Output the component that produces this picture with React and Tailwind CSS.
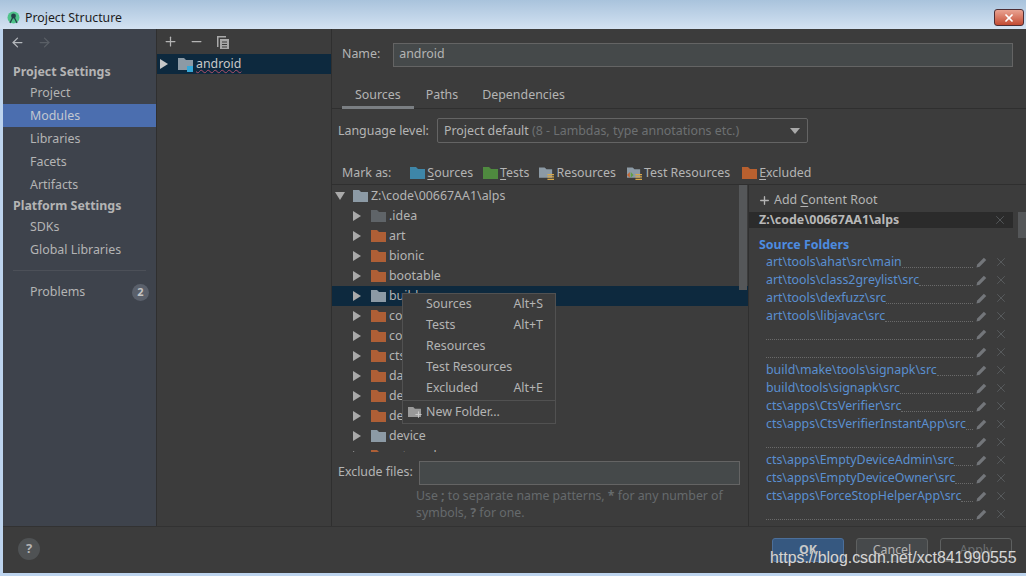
import { ArrowLeft, ArrowRight, Plus, Minus, X } from "lucide-react";

const font = "font-['Noto_Sans',sans-serif]";

const navProject = ["Project", "Modules", "Libraries", "Facets", "Artifacts"];
const navPlatform = ["SDKs", "Global Libraries"];

const treeRows = [
  { name: ".idea", color: "#5f6468" },
  { name: "art", color: "#ae5f36" },
  { name: "bionic", color: "#ae5f36" },
  { name: "bootable", color: "#ae5f36" },
  { name: "build", color: "#8c9aa5", selected: true },
  { name: "common", color: "#ae5f36" },
  { name: "compat", color: "#ae5f36" },
  { name: "cts", color: "#ae5f36" },
  { name: "dalvik", color: "#ae5f36" },
  { name: "developers", color: "#ae5f36" },
  { name: "development", color: "#ae5f36" },
  { name: "device", color: "#8c9aa5" },
  { name: "external", color: "#ae5f36" },
];

const sourceFolders = [
  "art\\tools\\ahat\\src\\main",
  "art\\tools\\class2greylist\\src",
  "art\\tools\\dexfuzz\\src",
  "art\\tools\\libjavac\\src",
  "",
  "",
  "build\\make\\tools\\signapk\\src",
  "build\\tools\\signapk\\src",
  "cts\\apps\\CtsVerifier\\src",
  "cts\\apps\\CtsVerifierInstantApp\\src",
  "",
  "cts\\apps\\EmptyDeviceAdmin\\src",
  "cts\\apps\\EmptyDeviceOwner\\src",
  "cts\\apps\\ForceStopHelperApp\\src",
  "",
];

const menuItems = [
  { label: "Sources", key: "Alt+S" },
  { label: "Tests", key: "Alt+T" },
  { label: "Resources" },
  { label: "Test Resources" },
  { label: "Excluded", key: "Alt+E" },
];

function Folder({ color, size = 15, className = "" }) {
  return (
    <svg width={size} height={(size * 12) / 15} viewBox="0 0 15 12" className={`shrink-0 ${className}`}>
      <path d="M0 0h6l2 2h7v10H0z" fill={color} />
    </svg>
  );
}

function Caret({ open, light }) {
  if (open) {
    return (
      <svg width="10" height="8" viewBox="0 0 10 8" className="shrink-0">
        <path d="M0 0h10L5 8z" fill="#a9a9a9" />
      </svg>
    );
  }
  return (
    <svg width="8" height="10" viewBox="0 0 8 10" className="shrink-0">
      <path d="M0 0l8 5-8 5z" fill={light ? "#c8c8c8" : "#a9a9a9"} />
    </svg>
  );
}

function ResourceFolder({ test }) {
  return (
    <svg width="15" height="15" viewBox="0 0 16 15" className="shrink-0">
      <path d="M0 1h6l2 2h6v9H0z" fill="#8c9aa5" />
      {test && <path d="M0 9l3-3v6z" fill="#c7652f" />}
      {test && <path d="M4 6l3 3-3 3z" fill="#5f9e46" />}
      <path d="M9 8h7v1.3H9zM9 10.5h7v1.3H9zM9 13h7v1.3H9z" fill="#d8a84a" />
    </svg>
  );
}

function MarkItem({ icon, first, rest, plain, className = "" }) {
  return (
    <span className={`flex items-center gap-[2px] ${className}`}>
      {icon}
      <span className="text-[#b4b4b4]">
        {plain ? plain : <><span className="underline underline-offset-2">{first}</span>{rest}</>}
      </span>
    </span>
  );
}

function Pencil() {
  return (
    <svg width="11" height="11" viewBox="0 0 12 12" className="shrink-0">
      <path d="M0.5 11.5l.8-3.4L8.6.8l2.6 2.6-7.3 7.3z" fill="#73767a" />
    </svg>
  );
}

function SourceRow({ path }) {
  return (
    <div className="flex h-[18px] items-center pl-[17px]">
      <div className="flex h-[14px] w-[207px] shrink-0 items-end">
        <span className="whitespace-nowrap text-[12.4px] leading-[14px] text-[#5a8fd0]">{path}</span>
        <span className="mb-[1px] min-w-0 flex-1 border-b border-dotted border-[#6a6a6a]"></span>
      </div>
      <span className="ml-[3px]"><Pencil /></span>
      <X size={14} strokeWidth={1.2} className="ml-[7px] shrink-0 text-[#63676a]" />
    </div>
  );
}

export default function App() {
  return (
    <div className={`relative flex h-[576px] w-[1026px] flex-col overflow-hidden bg-[#bdd4ee] text-[12.4px] text-[#b4b4b4] ${font}`}>
      {/* title bar */}
      <div className="flex h-[29px] shrink-0 items-center justify-between bg-gradient-to-b from-[#a9c3dc] to-[#d3e2f2] pl-[7px] pr-[2px] pt-[6px] text-black">
        <div className="flex items-center gap-[5px]">
          <svg width="13" height="14" viewBox="0 0 13 14">
            <circle cx="6.5" cy="6.5" r="6" fill="#4fc38a" />
            <circle cx="6.5" cy="5" r="2.4" fill="#24424a" />
            <path d="M3 12l3.5-7L10 12" fill="none" stroke="#24424a" strokeWidth="1.3" />
          </svg>
          <span className="mt-[2px] text-[12.3px] text-[#1c1c1c]">Project Structure</span>
        </div>
        <div className="flex h-[17px] w-[30px] items-center justify-center rounded-[3px] border border-[#4e2e34] bg-gradient-to-b from-[#e9a392] to-[#c24a32]">
          <X size={12} strokeWidth={3.5} className="text-white" />
        </div>
      </div>

      <div className="ml-[3px] flex min-h-0 flex-1 flex-col bg-[#3c3c3c]">
        <div className="flex min-h-0 flex-1 border-b border-[#323232]">
          {/* settings sidebar */}
          <aside className="flex w-[154px] shrink-0 flex-col border-r border-[#2f2f2f] bg-[#3e434c]">
            <div className="flex h-[26px] items-center gap-[12px] pl-[7px]">
              <ArrowLeft size={15} strokeWidth={2} className="text-[#b4b8bc]" />
              <ArrowRight size={15} strokeWidth={2} className="text-[#5a5f66]" />
            </div>
            <div className="mt-[6px] h-[20px] pl-[10px] text-[12.4px] font-bold leading-[21px]">Project Settings</div>
            {navProject.map((item) => (
              <div
                key={item}
                className={`h-[23px] pl-[27px] leading-[23px] ${item === "Modules" ? "bg-[#4b6eaf] text-[#c2c7cf]" : ""}`}
              >
                {item}
              </div>
            ))}
            <div className="h-[19px] pl-[10px] text-[12.4px] font-bold leading-[19px]">Platform Settings</div>
            {navPlatform.map((item) => (
              <div key={item} className="h-[23px] pl-[27px] leading-[23px]">{item}</div>
            ))}
            <div className="mx-[10px] mt-[9px] border-t border-[#4c5058]"></div>
            <div className="mt-[10px] flex h-[23px] items-center justify-between pl-[27px] pr-[7px]">
              <span>Problems</span>
              <span className="flex h-[17px] w-[17px] items-center justify-center rounded-full bg-[#5a606b] text-[11px] font-bold text-[#c4c4c4]">2</span>
            </div>
          </aside>

          {/* module tree */}
          <div className="flex w-[175px] shrink-0 flex-col border-r border-[#2f2f2f]">
            <div className="flex h-[25px] items-center gap-[11px] pl-[6px]">
              <Plus size={15} strokeWidth={2} className="text-[#b4b4b4]" />
              <Minus size={15} strokeWidth={2} className="text-[#b4b4b4]" />
              <svg width="14" height="14" viewBox="0 0 14 14" className="ml-[1px]">
                <path d="M1 1h9v1.5H2.5V12H1z" fill="#a9a9a9" />
                <path d="M4 4h9v10H4z" fill="#a9a9a9" />
                <path d="M6 6.5h5v1H6zM6 9h5v1H6zM6 11.5h5v1H6z" fill="#3c3c3c" />
              </svg>
            </div>
            <div className="flex h-[20px] items-center bg-[#0d293e] pl-[3px]">
              <Caret light />
              <span className="relative ml-[10px] mr-[3px]">
                <Folder color="#8c9aa5" size={15} />
                <span className="absolute -bottom-[2px] right-0 h-[6px] w-[6px] bg-[#35a8d8]"></span>
              </span>
              <span className="text-[#c8c8c8] underline decoration-wavy decoration-[#b0506a] decoration-1">android</span>
            </div>
          </div>

          {/* module detail */}
          <div className="flex min-w-0 flex-1 flex-col">
            <div className="mt-[13px] flex h-[25px] shrink-0 items-center gap-[13px] pl-[10px] pr-[13px]">
              <span>Name:</span>
              <div className="flex h-[24px] flex-1 items-center border border-[#646464] bg-[#45494a] px-[5px] text-[#b4b4b4]">android</div>
            </div>

            <div className="mt-[15px] flex h-[27px] shrink-0 items-stretch border-b border-[#2f2f2f] pl-[10px]">
              <div className="mb-[-1px] border-b-[3px] border-[#7b7f83] px-[13px] pt-[4px]">Sources</div>
              <div className="ml-[12px] pt-[4px]">Paths</div>
              <div className="ml-[24px] pt-[4px]">Dependencies</div>
            </div>

            <div className="mt-[9px] flex h-[25px] shrink-0 items-center gap-[8px] pl-[6px]">
              <span className="mt-[2px]">Language level:</span>
              <div className="flex h-[25px] w-[371px] items-center justify-between rounded-[2px] border border-[#646464] pl-[6px] pr-[7px]">
                <span className="mt-[2px]">Project default <span className="text-[#6d7072]">(8 - Lambdas, type annotations etc.)</span></span>
                <svg width="10" height="6" viewBox="0 0 10 6"><path d="M0 0h10L5 6z" fill="#a9a9a9" /></svg>
              </div>
            </div>

            <div className="mt-[21px] flex h-[19px] shrink-0 items-center pl-[10px]">
              <span className="mr-[19px]">Mark as:</span>
              <span className="flex items-center gap-[10px]">
                <MarkItem icon={<Folder color="#3e86a8" />} first="S" rest="ources" />
                <MarkItem icon={<Folder color="#4f8a3f" />} first="T" rest="ests" />
                <MarkItem icon={<ResourceFolder />} plain="Resources" />
                <MarkItem icon={<ResourceFolder test />} plain="Test Resources" className="ml-[1px]" />
                <MarkItem icon={<Folder color="#b8602f" />} first="E" rest="xcluded" className="ml-[2px]" />
              </span>
            </div>

            <div className="mt-[1px] flex min-h-0 flex-1 border-t border-[#2f2f2f]">
              <div className="flex w-[417px] shrink-0 flex-col border-r border-[#2f2f2f]">
                {/* folder tree */}
                <div className="relative h-[267px] shrink-0 overflow-hidden">
                  <div className="mt-[1px] flex h-[20px] items-center pl-[3px]">
                    <Caret open />
                    <Folder color="#8c9aa5" className="ml-[8px] mr-[3px]" />
                    <span>Z:\code\00667AA1\alps</span>
                  </div>
                  {treeRows.map((row) => (
                    <div
                      key={row.name}
                      className={`flex h-[20px] items-center pl-[21px] ${row.selected ? "bg-[#0d293e]" : ""}`}
                    >
                      <Caret />
                      <Folder color={row.color} className="ml-[10px] mr-[3px]" />
                      <span>{row.name}</span>
                    </div>
                  ))}

                  {/* scrollbar thumb */}
                  <div className="absolute right-[1px] top-0 h-[105px] w-[8px] bg-[#555759]"></div>

                  {/* context menu */}
                  <div className="absolute left-[70px] top-[108px] w-[154px] border border-[#515151] bg-[#3c3c3c]">
                    {menuItems.map((item) => (
                      <div key={item.label} className="flex h-[21px] items-center justify-between pl-[23px] pr-[12px]">
                        <span>{item.label}</span>
                        {item.key && <span>{item.key}</span>}
                      </div>
                    ))}
                    <div className="mt-[1px] flex h-[23px] items-center border-t border-[#515151] pl-[5px]">
                      <span className="relative mr-[5px]">
                        <Folder color="#9a9a9a" size={13} />
                        <Plus size={9} strokeWidth={3} className="absolute -bottom-[2px] -right-[2px] text-[#c8c8c8]" />
                      </span>
                      <span>New Folder...</span>
                    </div>
                  </div>
                </div>

                <div className="mt-[8px] flex h-[25px] shrink-0 items-center gap-[6px] pl-[6px]">
                  <span>Exclude files:</span>
                  <div className="h-[24px] w-[321px] border border-[#646464] bg-[#45494a]"></div>
                </div>
                <div className="ml-[84px] mt-[2px] w-[320px] text-[12.3px] leading-[17px] text-[#666a6c]">
                  Use <b>;</b> to separate name patterns, <b>*</b> for any number of symbols, <b>?</b> for one.
                </div>
              </div>

              {/* content roots */}
              <div className="flex min-w-0 flex-1">
                <div className="w-[264px] shrink-0 overflow-hidden">
                  <div className="flex h-[27px] items-center gap-[3px] pl-[9px] pt-[4px]">
                    <Plus size={13} strokeWidth={2.5} className="text-[#b4b4b4]" />
                    <span>Add <span className="underline underline-offset-2">C</span>ontent Root</span>
                  </div>
                  <div className="flex h-[16px] items-center justify-between bg-[#2b2b2b] pl-[10px] pr-[6px] font-bold text-[#b8b8b8]">
                    <span>Z:\code\00667AA1\alps</span>
                    <X size={14} strokeWidth={1.2} className="text-[#63676a]" />
                  </div>
                  <div className="mt-[8px] h-[17px] pl-[10px] text-[12.4px] font-bold leading-[18px] text-[#4d8ce0]">Source Folders</div>
                  {sourceFolders.map((path, i) => (
                    <SourceRow key={i} path={path} />
                  ))}
                </div>
                <div className="flex flex-1 justify-end pt-[27px]">
                  <div className="h-[26px] w-[8px] bg-[#555759]"></div>
                </div>
              </div>
            </div>
          </div>
        </div>

        {/* footer */}
        <div className="flex h-[46px] shrink-0 items-start justify-between pl-[15px] pr-[14px] pt-[11px]">
          <div className="flex h-[22px] w-[22px] items-center justify-center rounded-full bg-[#4f5254] text-[13px] font-bold text-[#b4b4b4]">?</div>
          <div className="flex gap-[12px]">
            <div className="flex h-[24px] w-[72px] items-center justify-center rounded-[3px] border border-[#4c6f9a] bg-[#365880] font-bold text-[#c8c8c8]">OK</div>
            <div className="flex h-[24px] w-[72px] items-center justify-center rounded-[3px] border border-[#5e6060] bg-[#46494b] text-[#b4b4b4]">Cancel</div>
            <div className="flex h-[24px] w-[72px] items-center justify-center rounded-[3px] border border-[#5e6060] text-[#6d7072]">Apply</div>
          </div>
        </div>
      </div>
      <div className="h-[3px] shrink-0"></div>

      {/* blog watermark */}
      <div className="absolute left-[770px] top-[547px] font-['Liberation_Sans',sans-serif] text-[15.9px] leading-[22px] text-[#d5d5d5] [text-shadow:0_0_1px_#555]">
        https://blog.csdn.net/xct841990555
      </div>
    </div>
  );
}
